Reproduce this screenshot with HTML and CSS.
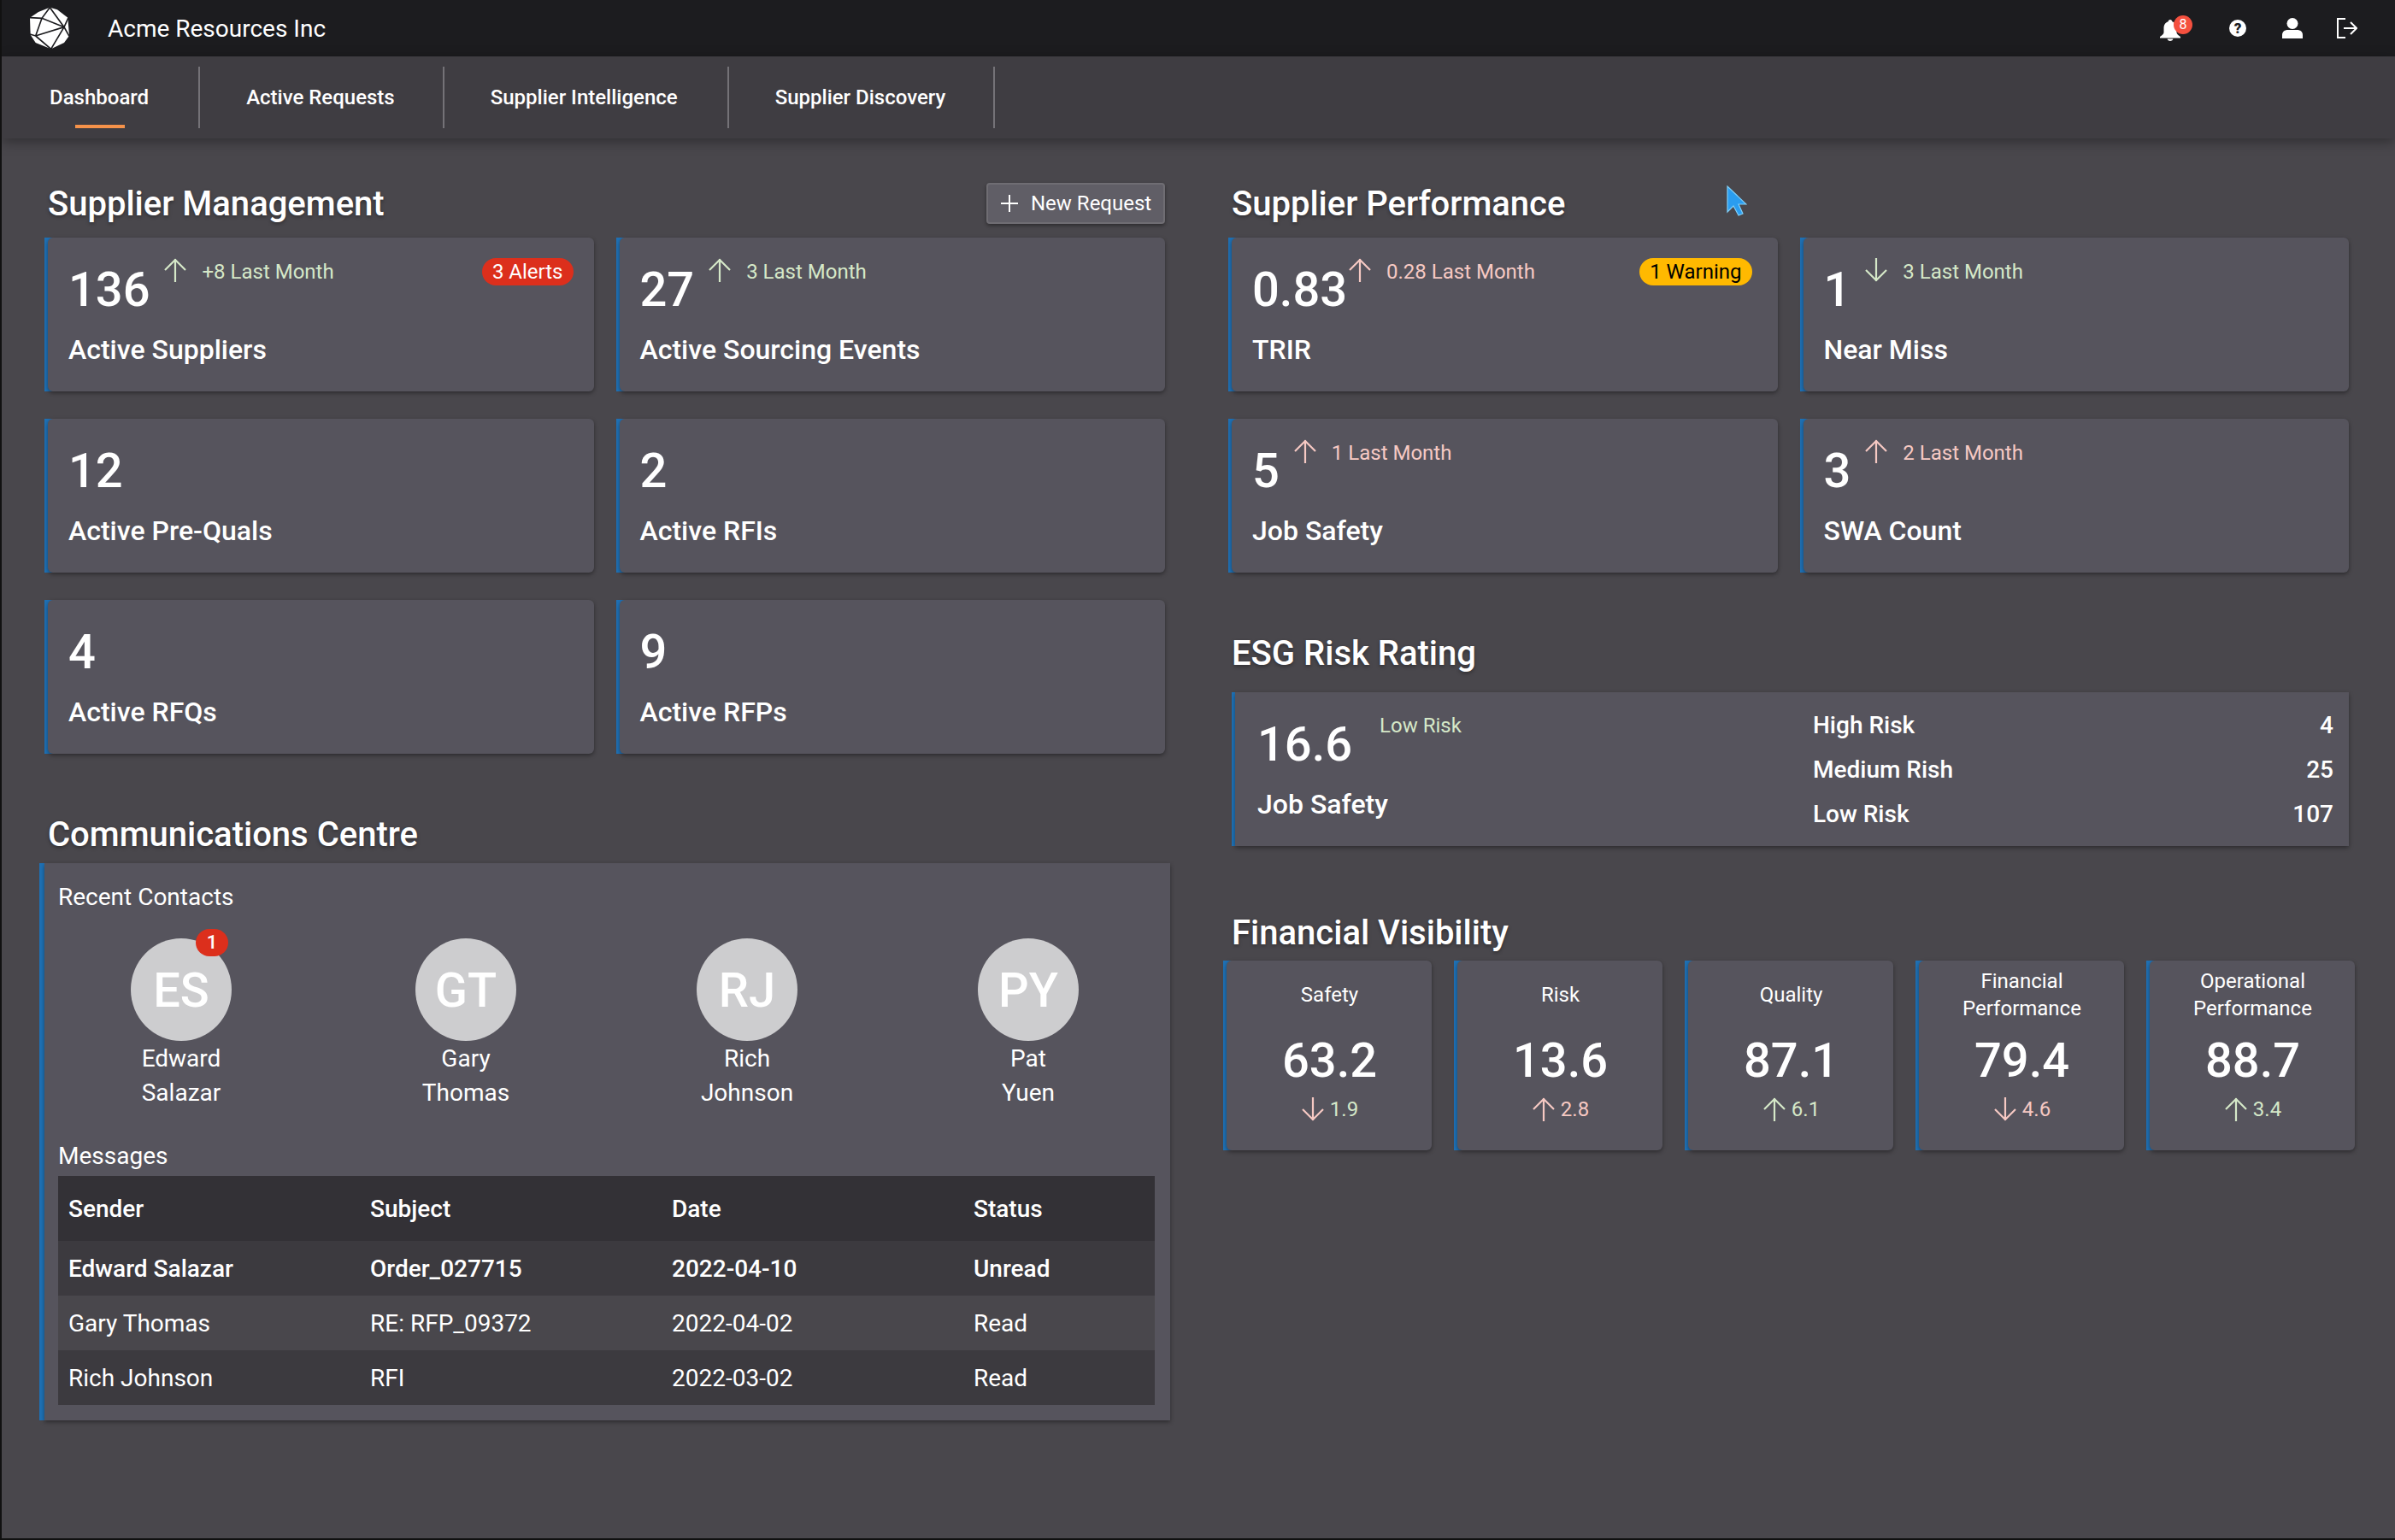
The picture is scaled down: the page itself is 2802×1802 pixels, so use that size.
FILE: index.html
```html
<!DOCTYPE html>
<html lang="en">
<head>
    <meta charset="UTF-8">
    <title>Acme Resources Inc</title>
    <link rel="stylesheet" href="styles.css">
</head>
<body>
    <svg class="sprite" width="0" height="0">
        <symbol id="arrow-up" viewBox="0 0 28 28"><path d="M14 1v27M2 14 14 2l12 12" fill="none" stroke="currentColor" stroke-width="2.2"/></symbol>
        <symbol id="arrow-down" viewBox="0 0 28 28"><path d="M14 0v27M2 14l12 12 12-12" fill="none" stroke="currentColor" stroke-width="2.2"/></symbol>
    </svg>

    <header class="topbar">
        <svg class="logo" viewBox="0 0 210 198">
            <path d="M100 26l26 8 37 28 5 63-18 25-46 22-54-22-18-28-2-60 30-20z" fill="#fff"/>
            <path d="M100 26 72 64 50 126M30 62l42 2 78 31M100 26l50 69M165 62l-15 33 18 32M150 95 50 126l-20-6M50 126l54 46M150 95l-46 77" fill="none" stroke="#1c1c1f" stroke-width="5"/>
        </svg>
        <span class="brand">Acme Resources Inc</span>
        <div class="topbar-icons">
            <span class="icon-btn bell">
                <svg viewBox="0 0 24 25" width="24" height="25"><path d="M12 0c1.400 0 2.200 1 2.300 2.200C18 3.300 19.500 6.500 19.500 10v5c0 1.500 2 3.500 4.500 5v1.500H0V20c2.500-1.500 4.500-3.500 4.500-5v-5c0-3.500 1.500-6.700 5.200-7.800C9.800 1 10.600 0 12 0z" fill="#fff"/><path d="M8.700 22.500h6.600c0 1.500-1.500 2.500-3.300 2.500s-3.300-1-3.300-2.500z" fill="#fff"/></svg>
                <span class="bell-count">8</span>
            </span>
            <span class="icon-btn help">?</span>
            <svg class="icon-btn" viewBox="0 0 24 24" width="24" height="24"><circle cx="12" cy="6.500" r="6.500" fill="#fff"/><path d="M0 24v-4c0-4 3-6 6.500-6h11c3.500 0 6.500 2 6.500 6v4z" fill="#fff"/></svg>
            <svg class="icon-btn" viewBox="0 0 24 24" width="24" height="24"><path d="M10 1H1v22h9M8 12h15M16 5l7 7-7 7" fill="none" stroke="#fff" stroke-width="2"/></svg>
        </div>
    </header>

    <nav class="tabs">
        <a class="tab active">Dashboard</a>
        <a class="tab">Active Requests</a>
        <a class="tab">Supplier Intelligence</a>
        <a class="tab">Supplier Discovery</a>
    </nav>

    <main class="content">
        <div class="column">
            <div class="section-head">
                <h2>Supplier Management</h2>
                <button class="new-request"><svg viewBox="0 0 20 20" width="20" height="20"><path d="M10 0v20M0 10h20" stroke="#fff" stroke-width="2"/></svg>New Request</button>
            </div>
            <div class="stat-grid">
                <div class="card stat">
                    <div class="stat-top"><span class="stat-value">136</span><svg class="arrow good"><use href="#arrow-up"/></svg><span class="stat-change good">+8 Last Month</span><span class="pill pill-red">3 Alerts</span></div>
                    <div class="stat-label">Active Suppliers</div>
                </div>
                <div class="card stat">
                    <div class="stat-top"><span class="stat-value">27</span><svg class="arrow good"><use href="#arrow-up"/></svg><span class="stat-change good">3 Last Month</span></div>
                    <div class="stat-label">Active Sourcing Events</div>
                </div>
                <div class="card stat">
                    <div class="stat-top"><span class="stat-value">12</span></div>
                    <div class="stat-label">Active Pre-Quals</div>
                </div>
                <div class="card stat">
                    <div class="stat-top"><span class="stat-value">2</span></div>
                    <div class="stat-label">Active RFIs</div>
                </div>
                <div class="card stat">
                    <div class="stat-top"><span class="stat-value">4</span></div>
                    <div class="stat-label">Active RFQs</div>
                </div>
                <div class="card stat">
                    <div class="stat-top"><span class="stat-value">9</span></div>
                    <div class="stat-label">Active RFPs</div>
                </div>
            </div>

            <h2 class="comms-title">Communications Centre</h2>
            <section class="card comms">
                <h3>Recent Contacts</h3>
                <div class="contacts">
                    <div class="contact">
                        <div class="avatar">ES<span class="avatar-badge">1</span></div>
                        <div class="contact-name">Edward<br>Salazar</div>
                    </div>
                    <div class="contact">
                        <div class="avatar">GT</div>
                        <div class="contact-name">Gary<br>Thomas</div>
                    </div>
                    <div class="contact">
                        <div class="avatar">RJ</div>
                        <div class="contact-name">Rich<br>Johnson</div>
                    </div>
                    <div class="contact">
                        <div class="avatar">PY</div>
                        <div class="contact-name">Pat<br>Yuen</div>
                    </div>
                </div>
                <h3 class="messages-title">Messages</h3>
                <table class="messages">
                    <thead>
                        <tr><th>Sender</th><th>Subject</th><th>Date</th><th>Status</th></tr>
                    </thead>
                    <tbody>
                        <tr class="unread"><td>Edward Salazar</td><td>Order_027715</td><td>2022-04-10</td><td>Unread</td></tr>
                        <tr><td>Gary Thomas</td><td>RE: RFP_09372</td><td>2022-04-02</td><td>Read</td></tr>
                        <tr><td>Rich Johnson</td><td>RFI</td><td>2022-03-02</td><td>Read</td></tr>
                    </tbody>
                </table>
            </section>
        </div>

        <div class="column">
            <div class="section-head">
                <h2>Supplier Performance</h2>
            </div>
            <div class="stat-grid">
                <div class="card stat">
                    <div class="stat-top"><span class="stat-value tight">0.83</span><svg class="arrow bad"><use href="#arrow-up"/></svg><span class="stat-change bad">0.28 Last Month</span><span class="pill pill-amber">1 Warning</span></div>
                    <div class="stat-label">TRIR</div>
                </div>
                <div class="card stat">
                    <div class="stat-top"><span class="stat-value">1</span><svg class="arrow good"><use href="#arrow-down"/></svg><span class="stat-change good">3 Last Month</span></div>
                    <div class="stat-label">Near Miss</div>
                </div>
                <div class="card stat">
                    <div class="stat-top"><span class="stat-value">5</span><svg class="arrow bad"><use href="#arrow-up"/></svg><span class="stat-change bad">1 Last Month</span></div>
                    <div class="stat-label">Job Safety</div>
                </div>
                <div class="card stat">
                    <div class="stat-top"><span class="stat-value">3</span><svg class="arrow bad"><use href="#arrow-up"/></svg><span class="stat-change bad">2 Last Month</span></div>
                    <div class="stat-label">SWA Count</div>
                </div>
            </div>

            <h2 class="esg-title">ESG Risk Rating</h2>
            <section class="card esg">
                <div class="esg-score">
                    <div class="esg-top"><span class="stat-value">16.6</span><span class="esg-level good">Low Risk</span></div>
                    <div class="stat-label">Job Safety</div>
                </div>
                <ul class="esg-list">
                    <li><span>High Risk</span><span>4</span></li>
                    <li><span>Medium Rish</span><span>25</span></li>
                    <li><span>Low Risk</span><span>107</span></li>
                </ul>
            </section>

            <h2 class="fin-title">Financial Visibility</h2>
            <div class="fin-row">
                <div class="card fin">
                    <div class="fin-name">Safety</div>
                    <div class="fin-value">63.2</div>
                    <div class="fin-delta"><svg class="arrow bad"><use href="#arrow-down"/></svg><span class="good">1.9</span></div>
                </div>
                <div class="card fin">
                    <div class="fin-name">Risk</div>
                    <div class="fin-value">13.6</div>
                    <div class="fin-delta"><svg class="arrow bad"><use href="#arrow-up"/></svg><span class="bad">2.8</span></div>
                </div>
                <div class="card fin">
                    <div class="fin-name">Quality</div>
                    <div class="fin-value">87.1</div>
                    <div class="fin-delta"><svg class="arrow good"><use href="#arrow-up"/></svg><span class="good">6.1</span></div>
                </div>
                <div class="card fin">
                    <div class="fin-name">Financial<br>Performance</div>
                    <div class="fin-value">79.4</div>
                    <div class="fin-delta"><svg class="arrow bad"><use href="#arrow-down"/></svg><span class="bad">4.6</span></div>
                </div>
                <div class="card fin">
                    <div class="fin-name">Operational<br>Performance</div>
                    <div class="fin-value">88.7</div>
                    <div class="fin-delta"><svg class="arrow good"><use href="#arrow-up"/></svg><span class="good">3.4</span></div>
                </div>
            </div>
        </div>
    </main>

    <svg class="cursor" viewBox="0 0 24 36" width="24" height="36"><path d="M1 1v30l7-7 6 11 5-2-5-11h9z" fill="#2a9df0" stroke="#7fd0fa" stroke-width="1.200"/></svg>
</body>
</html>
```

FILE: styles.css
```css
* {
    box-sizing: border-box;
}

html, body {
    height: 100%;
}

body {
    margin: 0;
    width: 2802px;
    height: 1802px;
    overflow: hidden;
    position: relative;
    font-family: Roboto, "Liberation Sans", sans-serif;
    color: #fff;
    background-color: #49474c;
    border-left: 2px solid #111;
    border-bottom: 2px solid #111;
}

.sprite {
    display: block;
}

h2, h3 {
    margin: 0;
}

/* Top bar */
.topbar {
    height: 66px;
    display: flex;
    align-items: center;
    background-color: #1c1c1f;
    padding: 0 44px 0 23px;
}

.logo {
    width: 70px;
    height: 66px;
    margin-right: 31px;
}

.brand {
    font-size: 28px;
}

.topbar-icons {
    margin-left: auto;
    display: flex;
    align-items: center;
    gap: 40px;
}

.icon-btn {
    display: block;
}

.bell {
    position: relative;
    width: 24px;
    height: 25px;
    margin-top: 5px;
    margin-right: 17px;
}

.bell svg {
    display: block;
}

.bell-count {
    position: absolute;
    top: -5px;
    left: 16px;
    width: 22px;
    height: 22px;
    border-radius: 50%;
    background-color: #f4503f;
    font-size: 16px;
    line-height: 22px;
    text-align: center;
}

.help {
    width: 20px;
    height: 20px;
    margin-right: 2px;
    border-radius: 50%;
    background-color: #fff;
    color: #1c1c1f;
    font-size: 17px;
    font-weight: 900;
    line-height: 20px;
    text-align: center;
}

/* Tabs */
.tabs {
    height: 96px;
    display: flex;
    align-items: center;
    background-color: #3f3d42;
    box-shadow: 0 4px 14px rgba(0, 0, 0, 0.35);
    position: relative;
}

.tab {
    height: 72px;
    display: flex;
    align-items: center;
    padding: 0 56px 0 54px;
    border-right: 2px solid #747277;
    font-size: 24px;
    font-weight: 500;
    position: relative;
}

.tab:first-child {
    padding: 0 58px 0 56px;
}

.tab:nth-child(3) {
    padding-right: 58px;
}

.tab.active::after {
    content: "";
    position: absolute;
    left: 86px;
    bottom: 0;
    width: 58px;
    height: 4px;
    background-color: #f5924a;
}

/* Page layout */
.content {
    display: grid;
    grid-template-columns: 1311px 1311px;
    column-gap: 74px;
    padding: 52px 0 0 50px;
}

.section-head {
    height: 48px;
    margin-bottom: 16px;
    display: flex;
    align-items: center;
    justify-content: space-between;
    padding-left: 4px;
}

h2 {
    font-size: 40px;
    font-weight: 500;
    line-height: 48px;
    text-shadow: 0 2px 4px rgba(0, 0, 0, 0.35);
}

.section-head h2 {
    margin-top: 2px;
}

.new-request {
    width: 209px;
    height: 48px;
    display: flex;
    align-items: center;
    padding: 0 0 0 15px;
    gap: 15px;
    font-family: inherit;
    font-size: 24px;
    color: #fff;
    background-color: #605e66;
    border: 2px solid #6f6d73;
    border-radius: 4px;
    box-shadow: 0 2px 4px rgba(0, 0, 0, 0.4);
}

.card {
    position: relative;
    margin-left: 4px;
    background-color: #56545d;
    border-radius: 6px;
    box-shadow: 0 2px 5px rgba(0, 0, 0, 0.4);
}

/* blue bar, sits behind the rounded left corners of the card */
.card::before {
    content: "";
    position: absolute;
    top: 0;
    bottom: 0;
    left: -4px;
    width: 12px;
    background-color: #1f71b5;
    z-index: -1;
}

/* Stat cards */
.stat-grid {
    display: grid;
    grid-template-columns: 1fr 1fr;
    column-gap: 26px;
    row-gap: 32px;
}

.stat {
    height: 180px;
    padding: 24px 24px 0;
}

.stat-top {
    height: 68px;
    display: flex;
    align-items: flex-start;
}

.stat-value {
    font-size: 56px;
    font-weight: 500;
    line-height: 64px;
    margin-top: 5px;
    margin-right: 16px;
}

.stat-value.tight {
    margin-right: 1px;
}

.arrow {
    width: 28px;
    height: 28px;
    flex: none;
}

.good {
    color: #d5e8c8;
}

.bad {
    color: #f6c9c3;
}

.stat-change {
    font-size: 24px;
    line-height: 32px;
    margin-left: 17px;
}

.pill {
    margin-left: auto;
    height: 32px;
    padding: 0 12px;
    border-radius: 16px;
    font-size: 24px;
    line-height: 32px;
}

.pill-red {
    background-color: #dc2f1c;
}

.pill-amber {
    margin-right: 6px;
    background-color: #ffb900;
    color: #000;
}

.stat-label {
    margin-top: 19px;
    font-size: 32px;
    font-weight: 500;
    line-height: 40px;
}

/* Communications */
.comms-title {
    margin: 71px 0 9px;
    padding-left: 4px;
}

.comms {
    margin: 0 -6px 0 0;
    height: 652px;
    padding: 20px 18px 0 16px;
    border-radius: 0;
}

.comms::before {
    left: -6px;
}

h3 {
    font-size: 28px;
    font-weight: 400;
    line-height: 40px;
}

.contacts {
    display: grid;
    grid-template-columns: repeat(4, 200px);
    column-gap: 129px;
    padding-left: 48px;
    margin-top: 28px;
}

.contact {
    text-align: center;
}

.contact:first-child {
    margin-left: -8px;
}

.avatar {
    position: relative;
    width: 118px;
    height: 120px;
    margin: 0 auto;
    border-radius: 50%;
    background-color: #cdcdcf;
    font-size: 56px;
    font-weight: 500;
    line-height: 122px;
}

.avatar-badge {
    position: absolute;
    top: -11px;
    left: 76px;
    width: 38px;
    height: 32px;
    border-radius: 16px;
    background-color: #dc2f1c;
    font-size: 22px;
    line-height: 32px;
}

.contact-name {
    margin-top: 1px;
    font-size: 28px;
    line-height: 40px;
}

.messages-title {
    margin-top: 34px;
    margin-bottom: 3px;
}

.messages {
    width: 100%;
    border-collapse: collapse;
    table-layout: fixed;
    font-size: 28px;
}

.messages th, .messages td {
    padding: 0 0 0 12px;
    text-align: left;
}

.messages th:nth-child(-n+3) {
    width: 353px;
}

.messages th {
    height: 76px;
    font-weight: 500;
    background-color: #333136;
}

.messages td {
    height: 64px;
    background-color: #3c3a3f;
}

.messages tr:nth-child(2) td {
    background-color: #49474c;
}

.messages .unread td {
    font-weight: 500;
}

/* ESG */
.esg-title {
    margin: 71px 0 21px;
    padding-left: 4px;
}

.esg {
    height: 180px;
    margin-left: 8px;
    display: flex;
    padding: 0 18px 0 26px;
    border-radius: 0;
}

.esg-score {
    width: 650px;
    padding-top: 24px;
}

.esg-top {
    height: 68px;
    display: flex;
    align-items: flex-start;
}

.esg-level {
    font-size: 24px;
    line-height: 30px;
    margin-left: 16px;
}

.esg-list {
    flex: 1;
    list-style: none;
    margin: 0;
    padding: 20px 0 0;
    font-size: 28px;
    font-weight: 500;
}

.esg-list li {
    height: 52px;
    line-height: 38px;
    display: flex;
    justify-content: space-between;
}

/* Financial */
.fin-title {
    margin: 78px 0 8px;
    padding-left: 4px;
}

.fin-row {
    display: grid;
    grid-template-columns: repeat(5, 244px);
    column-gap: 26px;
    margin-left: -6px;
}

.fin {
    height: 222px;
    padding: 8px 0 0 1px;
    text-align: center;
}

.fin-name {
    height: 64px;
    display: flex;
    align-items: center;
    justify-content: center;
    font-size: 24px;
    line-height: 32px;
}

.fin-value {
    margin-top: 11px;
    font-size: 56px;
    font-weight: 500;
    line-height: 68px;
}

.fin-delta {
    margin-top: 9px;
    display: flex;
    align-items: center;
    justify-content: center;
    gap: 6px;
    font-size: 24px;
}

/* Screen recording pointer */
.cursor {
    position: absolute;
    left: 2018px;
    top: 217px;
}
```
